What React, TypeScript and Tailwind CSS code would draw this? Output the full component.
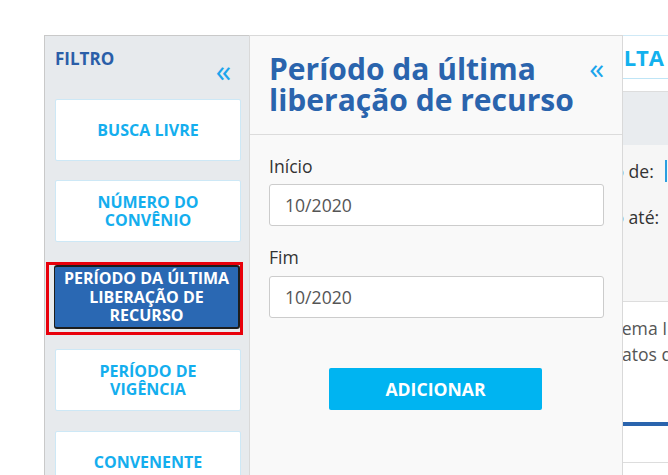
import React from "react";

const filtros = ["BUSCA LIVRE", "NÚMERO DO CONVÊNIO"];

function FilterButton({ label }: { label: string }) {
  return (
    <button className="flex h-[62px] w-[186px] items-center justify-center rounded-[2px] border border-[#cde8f6] bg-white px-3 text-center text-[16px] font-bold leading-[18px] text-[#14aeee]">
      {label}
    </button>
  );
}

export default function App() {
  return (
    <div className="h-[475px] w-[668px] overflow-hidden bg-white font-['Open_Sans',sans-serif]">
      <div className="flex h-full pl-[44px] pt-[35px]">
        {/* barra de filtros */}
        <aside className="w-[205px] shrink-0 border-l border-t border-[#c9c9c9] bg-[#e7eaed] pl-[10px] pr-[8px]">
          <div className="flex h-[63px] justify-between pt-[13px]">
            <span className="text-[17px] font-bold leading-[20px] text-[#2a5ea8]">FILTRO</span>
            <span className="mr-[10px] mt-[8px] h-[26px] text-[31px] leading-[26px] text-[#1ba5ec]">«</span>
          </div>
          <div className="flex flex-col">
            <FilterButton label={filtros[0]} />
            <div className="mt-[19px]">
              <FilterButton label={filtros[1]} />
            </div>
            <div className="ml-[-9px] mt-[20px] h-[73px] w-[197px] border-[3px] border-[#e8000b] pl-[5px]">
              <button className="flex h-[64px] w-[186px] items-center justify-center rounded-[3px] border-2 border-l border-[#1d1d1d] bg-[#2a68b3] px-2 text-center text-[16px] font-bold leading-[18.5px] text-white">
                PERÍODO DA ÚLTIMA LIBERAÇÃO DE RECURSO
              </button>
            </div>
            <div className="mt-[14px]">
              <FilterButton label="PERÍODO DE VIGÊNCIA" />
            </div>
            <div className="mt-[20px]">
              <FilterButton label="CONVENENTE" />
            </div>
          </div>
        </aside>

        {/* painel do filtro */}
        <section className="w-[374px] shrink-0 border-l border-r border-t border-[#d9d9d9] bg-[#f9f9f9]">
          <div className="flex h-[99px] border-b border-[#dcdcdc] pl-[19px] pr-[18px] pt-[17px]">
            <h1 className="flex-1 text-[30px] font-bold leading-[31px] text-[#2a64ad]">
              Período da última liberação de recurso
            </h1>
            <span className="mt-[2px] h-[26px] text-[30px] leading-[26px] text-[#1ba5ec]">«</span>
          </div>
          <div className="px-[19px] pt-[19px]">
            <label className="block text-[17.6px] leading-[24px] text-[#333]">Início</label>
            <div className="mt-[6px] flex h-[42px] w-[335px] items-center rounded-[3px] border border-[#cccccc] bg-white pl-[15px] text-[17.6px] text-[#555]">
              10/2020
            </div>
            <label className="mt-[19px] block text-[17.6px] leading-[24px] text-[#333]">Fim</label>
            <div className="mt-[7px] flex h-[42px] w-[335px] items-center rounded-[3px] border border-[#cccccc] bg-white pl-[15px] text-[17.6px] text-[#555]">
              10/2020
            </div>
            <div className="mt-[50px] flex justify-center pr-[1px]">
              <button className="h-[42px] w-[213px] rounded-[2px] bg-[#00b4f1] text-[17.6px] font-bold text-white">
                ADICIONAR
              </button>
            </div>
          </div>
        </section>

        {/* conteúdo ao fundo */}
        <div className="min-w-0 flex-1 overflow-hidden border-t border-[#cfe9f6]">
          <div className="flex h-[43px] items-center justify-end whitespace-nowrap border-b border-[#bfe5f6] pr-[4px] text-[22px] font-bold text-[#12b1ee]">
            CONSULTA
          </div>
          <div className="h-[13px] border-b border-[#dddddd] bg-white" />
          <div className="h-[53px] bg-[#e9ecef]" />
          <div className="h-[157px] border-b border-[#dddddd] bg-[#f6f6f6] pt-[15px] text-[17.6px] text-[#333]">
            <div className="ml-[-63px] flex h-[22px] items-center whitespace-nowrap">
              <span>Período de:</span>
              <span className="ml-[11px] h-[22px] w-[20px] border-l-2 border-[#2a9ee0]" />
            </div>
            <div className="ml-[-63px] mt-[24px] flex h-[22px] items-center whitespace-nowrap">
              <span>Período até:</span>
            </div>
          </div>
          <div className="bg-white pt-[13px] text-[17.6px] leading-[26px] text-[#555]">
            <div className="ml-[-30px] whitespace-nowrap">Sistema Integrado</div>
            <div className="ml-[-47px] whitespace-nowrap">Contratos de</div>
            <div className="mt-[55px] h-[4px] bg-[#2a64ad]" />
            <div className="mt-[36px] border-b border-[#dddddd]" />
          </div>
        </div>
      </div>
    </div>
  );
}
